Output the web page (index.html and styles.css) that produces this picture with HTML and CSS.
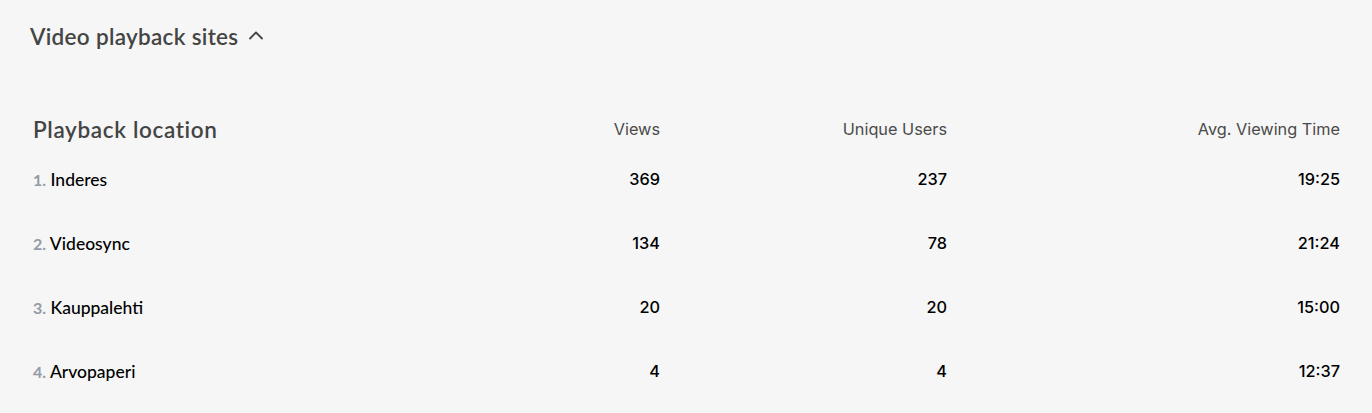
FILE: index.html
```html
<!DOCTYPE html>
<html>
<head>
<meta charset="utf-8">
<link rel="stylesheet" href="styles.css">
</head>
<body>
<div class="page">
  <div class="section-title">
    <span class="title-text">Video playback sites</span>
    <svg class="chevron" width="16" height="10" viewBox="0 0 16 10"><polyline points="2,8.5 8,2.5 14,8.5" fill="none" stroke="#444" stroke-width="1.8" stroke-linecap="round" stroke-linejoin="round"/></svg>
  </div>
  <div class="table">
    <div class="row head">
      <div class="cell name-head">Playback location</div>
      <div class="cell num">Views</div>
      <div class="cell num">Unique Users</div>
      <div class="cell num">Avg. Viewing Time</div>
    </div>
    <div class="row body">
      <div class="cell name"><span class="idx">1.</span> Inderes</div>
      <div class="cell num val">369</div>
      <div class="cell num val">237</div>
      <div class="cell num val">19:25</div>
    </div>
    <div class="row body">
      <div class="cell name"><span class="idx">2.</span> Videosync</div>
      <div class="cell num val">134</div>
      <div class="cell num val">78</div>
      <div class="cell num val">21:24</div>
    </div>
    <div class="row body">
      <div class="cell name"><span class="idx">3.</span> Kauppalehti</div>
      <div class="cell num val">20</div>
      <div class="cell num val">20</div>
      <div class="cell num val">15:00</div>
    </div>
    <div class="row body">
      <div class="cell name"><span class="idx">4.</span> Arvopaperi</div>
      <div class="cell num val">4</div>
      <div class="cell num val">4</div>
      <div class="cell num val">12:37</div>
    </div>
  </div>
</div>
</body>
</html>
```
FILE: styles.css
```css
html, body {
  margin: 0;
  padding: 0;
  background: #f6f6f6;
}
.page {
  padding: 22px 32px 0 30px;
  font-family: Inter, "Liberation Sans", sans-serif;
}
.section-title {
  display: flex;
  align-items: center;
  gap: 10px;
  height: 28px;
}
.title-text {
  font-family: Lato, "Liberation Sans", sans-serif;
  font-size: 22.5px;
  font-weight: 600;
  letter-spacing: 0.3px;
  color: #444444;
}
.chevron {
  margin-top: -2px;
}
.table {
  margin-top: 61px;
  margin-left: 3px;
  width: 1307px;
}
.row {
  display: grid;
  grid-template-columns: 1fr 200px 287px 393px;
  align-items: center;
}
.row.head {
  height: 36px;
}
.row.body {
  height: 64px;
}
.name-head {
  font-family: Lato, "Liberation Sans", sans-serif;
  font-size: 22.5px;
  font-weight: 600;
  letter-spacing: 0.65px;
  color: #444444;
}
.num {
  text-align: right;
  font-size: 16.3px;
  color: #4a4a4a;
}
.val {
  color: #000;
  font-weight: 500;
}
.name {
  font-family: Lato, "Liberation Sans", sans-serif;
  font-size: 17.5px;
  font-weight: 500;
  color: #000;
}
.idx {
  color: #939ba6;
  font-weight: 700;
  font-size: 16px;
}
```
